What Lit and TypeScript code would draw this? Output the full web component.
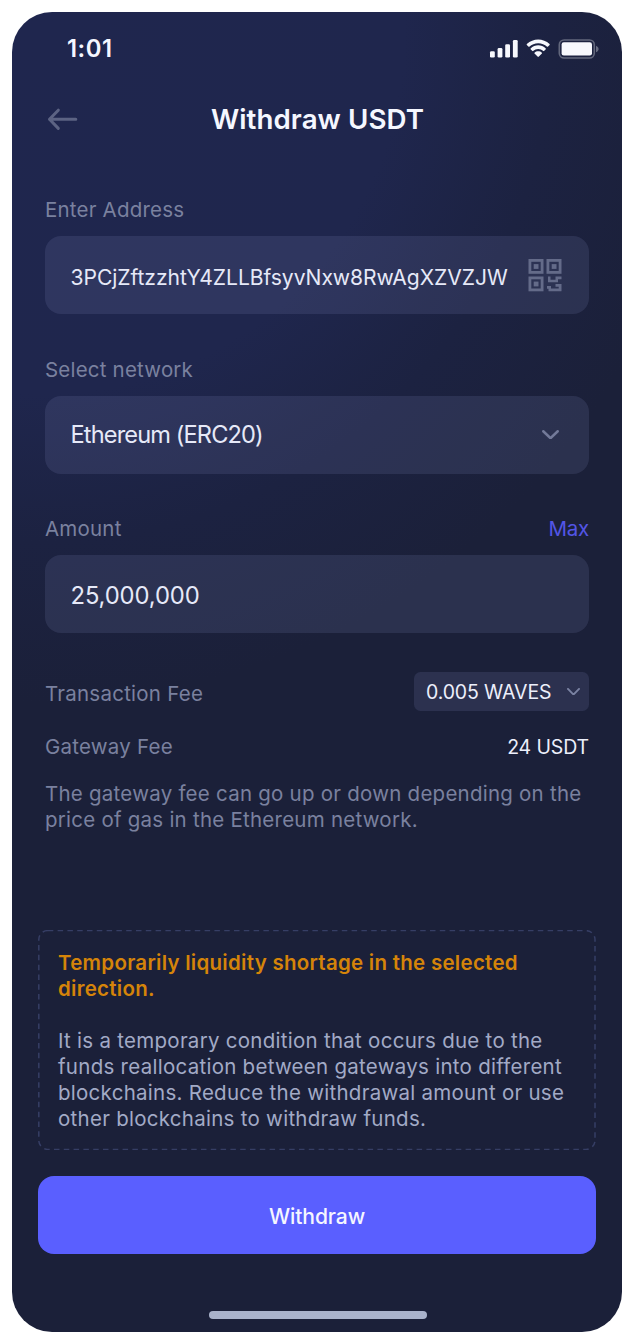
import { LitElement, html, css, svg } from "lit";
import { customElement, property } from "lit/decorators.js";

const chevron = (w: number, h: number, stroke: number) => html`
  <svg width=${w} height=${h} viewBox="0 0 ${w} ${h}" fill="none" stroke="currentColor"
    stroke-width=${stroke} stroke-linecap="round" stroke-linejoin="round">
    <path d="M${stroke / 2} ${stroke / 2}L${w / 2} ${h - stroke / 2}L${w - stroke / 2} ${stroke / 2}" />
  </svg>`;

const finder = (x: number, y: number) => svg`
  <rect x=${x + 1.4} y=${y + 1.4} width="12.2" height="12" fill="none" stroke="currentColor" stroke-width="2.8" />
  <rect x=${x + 5.2} y=${y + 5.1} width="4.8" height="4.8" fill="currentColor" />`;

@customElement("status-bar")
export class StatusBar extends LitElement {
  static styles = css`
    :host { display: flex; justify-content: space-between; align-items: center; height: 30px; padding: 0 23px 0 55px; }
    .time { font-weight: 600; font-size: 23.8px; line-height: 30px; letter-spacing: 0.55px; }
    svg { display: block; }
  `;
  render() {
    return html`
      <span class="time">1:01</span>
      <svg width="110" height="22" viewBox="0 0 110 22" fill="#f7f8fd">
        <rect x="1" y="13.3" width="4.8" height="6.2" rx="1.3" />
        <rect x="8.6" y="10" width="4.8" height="9.5" rx="1.3" />
        <rect x="16.2" y="6.2" width="4.8" height="13.3" rx="1.3" />
        <rect x="23.9" y="2" width="4.8" height="17.5" rx="1.3" />
        <g transform="translate(36.9 1.6)">
          <path d="M12.3 3.6c3.4 0 6.5 1.3 8.9 3.5.2.2.5.2.7 0l1.8-1.8c.2-.2.2-.5 0-.8C17.3-1.5 7.3-1.5.9 4.5c-.2.3-.2.6 0 .8l1.8 1.8c.2.2.5.2.7 0 2.4-2.2 5.5-3.5 8.9-3.5z" />
          <path d="M12.3 9.5c1.9 0 3.7.7 5.1 2 .2.2.5.2.7 0l1.8-1.9c.2-.2.2-.6 0-.8-4.3-4.1-10.9-4.1-15.2 0-.2.2-.2.6 0 .8l1.8 1.9c.2.2.5.2.7 0 1.4-1.3 3.2-2 5.100-2z" />
          <path d="M16 13.9c.2-.2.2-.6 0-.8-2.1-1.8-5.3-1.8-7.4 0-.2.2-.2.6 0 .8l3.3 3.3c.2.2.6.2.8 0z" />
        </g>
        <rect x="70.3" y="2" width="35" height="18" rx="4.8" fill="none" stroke="#f7f8fd" stroke-opacity=".32" stroke-width="1.6" />
        <rect x="72.600" y="4.300" width="30.400" height="13.200" rx="2.200" />
        <path d="M107 7.700c1.700.8 2.600 1.900 2.600 3.300s-.9 2.500-2.600 3.300z" fill-opacity=".35" />
      </svg>`;
  }
}

@customElement("form-field")
export class FormField extends LitElement {
  @property() label = "";
  @property() action = "";
  static styles = css`
    :host { display: block; }
    .head { display: flex; justify-content: space-between; height: 26px; line-height: 26px; padding: 1px 0 0 0.5px; margin-bottom: 13px; font-size: 20.5px; letter-spacing: 0.2px; color: #7a819f; }
    .action { color: #5355e6; letter-spacing: -0.2px; }
    .box { display: flex; align-items: center; justify-content: space-between; height: 78px; box-sizing: border-box; border-radius: 16px; padding: 0 26px; background: rgba(142, 146, 200, 0.15); color: #e6e9f8; }
  `;
  render() {
    return html`
      <div class="head"><span>${this.label}</span><span class="action">${this.action}</span></div>
      <div class="box"><slot></slot></div>`;
  }
}

@customElement("app-root")
export class AppRoot extends LitElement {
  static styles = css`
    :host { display: block; height: 1344px; box-sizing: border-box; padding: 12px; background: #fff; font-family: "Inter", sans-serif; color: #f5f7ff; }
    svg { display: block; flex: none; }
    .phone { height: 1320px; box-sizing: border-box; border-radius: 40px; overflow: hidden; padding-top: 22px; display: flex; flex-direction: column;
      background: radial-gradient(circle 670px at 30px 20px, #1f264e 0, #1f264d 54%, #1c2241 76%, #1b2039 100%); }
    .nav { display: grid; grid-template-columns: 60px 1fr 60px; align-items: center; margin: 38px 34px 0 35px; height: 34px; color: #5c6383; }
    .title { font-size: 27.7px; font-weight: 600; line-height: 34px; letter-spacing: 0.07px; text-align: center; color: #f5f7ff; }
    .form { display: flex; flex-direction: column; gap: 41.5px; margin: 60px 33px 0 32.5px; }
    .address { font-size: 21.1px; letter-spacing: -0.06px; line-height: 26px; padding-top: 6px; white-space: nowrap; }
    .network { font-size: 23.6px; letter-spacing: -0.87px; line-height: 30px; }
    .amount { font-size: 23.8px; letter-spacing: -0.12px; line-height: 30px; padding-top: 4px; }
    .icon { color: #646b89; }
    .arrow { color: #737a99; margin-right: 4px; }
    .qr { margin-right: 1px; }
    .fees { margin: 39px 33px 0 33px; font-size: 20.5px; color: #7a819f; letter-spacing: 0.24px; line-height: 26px; }
    .row { display: flex; justify-content: space-between; }
    .row.first { height: 39px; }
    .row.first .name { padding-top: 9px; }
    .row.second { margin-top: 22.5px; height: 26px; }
    .chip { display: flex; align-items: center; justify-content: space-between; width: 175px; height: 39px; box-sizing: border-box; padding: 0 9.5px 0 12px; border-radius: 6.5px; background: #2c314f; color: #7b83a3; }
    .value { font-size: 19.5px; letter-spacing: -0.13px; color: #eceffb; }
    .hint { margin: 21px 0 0; white-space: nowrap; }
    .warning { position: relative; margin: 97px 26px 0 26px; height: 220px; box-sizing: border-box; padding: 20.5px 20px; font-size: 20.5px; line-height: 26px; letter-spacing: 0.27px; color: #a2aac6; white-space: nowrap; }
    .outline { position: absolute; inset: 0; }
    .warning h2 { margin: 0 0 26px; font: inherit; font-weight: 600; color: #d58409; }
    .warning p { margin: 0; }
    .submit { margin: 26.5px 26px 0; height: 78px; flex: none; border: 0; border-radius: 16px; padding: 4px 0 0; background: #5a5fff; color: #f5f6ff; font: 500 21.1px/26px "Inter", sans-serif; letter-spacing: -0.1px; }
    .home { width: 218px; height: 8px; border-radius: 4px; background: #a9b2cb; margin: 57px 0 0 197px; }
  `;
  render() {
    return html`
      <div class="phone">
        <status-bar></status-bar>
        <div class="nav">
          <svg width="32" height="24" viewBox="0 0 32 24" fill="none" stroke="currentColor" stroke-width="3" stroke-linecap="round" stroke-linejoin="round">
            <path d="M28.800 12.300H2.500M11.300 3.200L2.500 12.300L11.300 21.400" />
          </svg>
          <span class="title">Withdraw USDT</span>
        </div>
        <div class="form">
          <form-field label="Enter Address">
            <span class="address">3PCjZftzzhtY4ZLLBfsyvNxw8RwAgXZVZJW</span>
            <svg class="icon qr" width="34" height="33" viewBox="0 0.5 34 33">
              ${finder(0.5, 0.5)} ${finder(18.5, 0.5)} ${finder(0.5, 18)}
              <path fill="currentColor" d="M20 18h2.500v3.200h5V18H33.500v2.800H30v3H20zM27.500 25.500H33.500v4.500H30.700v-1.800H27.500zM19 27.500h4v2.500H33.500v2.800H20.500v-2.500H19z" />
            </svg>
          </form-field>
          <form-field label="Select network">
            <span class="network">Ethereum (ERC20)</span>
            <span class="arrow">${chevron(17, 9.5, 2.5)}</span>
          </form-field>
          <form-field label="Amount" action="Max">
            <span class="amount">25,000,000</span>
          </form-field>
        </div>
        <div class="fees">
          <div class="row first">
            <span class="name">Transaction Fee</span>
            <span class="chip"><span class="value">0.005 WAVES</span>${chevron(13, 7.5, 1.9)}</span>
          </div>
          <div class="row second"><span>Gateway Fee</span><span class="value">24 USDT</span></div>
          <p class="hint">The gateway fee can go up or down depending on the<br />price of gas in the Ethereum network.</p>
        </div>
        <div class="warning">
          <svg class="outline" width="558" height="220" fill="none" stroke="#363e65" stroke-width="1.5">
            <rect x="0.8" y="0.6" width="556.2" height="218.8" rx="9" stroke-dasharray="5.5 4.3" />
          </svg>
          <h2>Temporarily liquidity shortage in the selected<br />direction.</h2>
          <p>It is a temporary condition that occurs due to the<br />funds reallocation between gateways into different<br />blockchains. Reduce the withdrawal amount or use<br />other blockchains to withdraw funds.</p>
        </div>
        <button class="submit">Withdraw</button>
        <div class="home"></div>
      </div>`;
  }
}
